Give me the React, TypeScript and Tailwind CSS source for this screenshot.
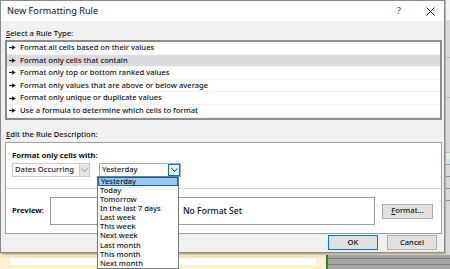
import React from "react";

const font = { fontFamily: '"Noto Sans", "Open Sans", sans-serif' };

const ruleTypes = [
  "Format all cells based on their values",
  "Format only cells that contain",
  "Format only top or bottom ranked values",
  "Format only values that are above or below average",
  "Format only unique or duplicate values",
  "Use a formula to determine which cells to format",
];

const dateOptions = [
  "Yesterday",
  "Today",
  "Tomorrow",
  "In the last 7 days",
  "Last week",
  "This week",
  "Next week",
  "Last month",
  "This month",
  "Next month",
];

function Arrow() {
  return (
    <svg width="7" height="5" viewBox="0 0 7 5" className="shrink-0">
      <path d="M0 2.5h3" stroke="#222" strokeWidth="1.2" />
      <path d="M3 0.3L6.8 2.5L3 4.7Z" fill="#222" />
    </svg>
  );
}

function Chevron({ color }: { color: string }) {
  return (
    <svg width="7" height="4" viewBox="0 0 7 4">
      <path d="M0.5 0.5L3.5 3.3L6.5 0.5" fill="none" stroke={color} strokeWidth="1" />
    </svg>
  );
}

export default function App() {
  return (
    <div className="relative w-[450px] h-[269px] overflow-hidden bg-[#fbf0d2] text-[#111] font-medium" style={font}>
      <div className="flex h-[255px]">
        {/* dialog */}
        <div className="w-[445px] h-[253px] flex flex-col bg-[#f0f0f0] border border-[#8a8a8a] shadow-[1px_1px_3px_rgba(0,0,0,0.45)]">
          {/* title bar */}
          <div className="h-[20px] shrink-0 bg-white flex items-center pl-[6px] pr-[9px] text-[9.2px] font-normal">
            <span className="flex-1">New Formatting Rule</span>
            <span className="text-[9px] text-[#444] mr-[25px]">?</span>
            <svg width="9" height="9" viewBox="0 0 9 9">
              <path d="M0.5 0.5L8.5 8.5M8.5 0.5L0.5 8.5" stroke="#222" strokeWidth="1" />
            </svg>
          </div>

          <div className="flex flex-col px-[4px] text-[7.6px]">
            <div className="h-[19px] flex items-end pb-[1px] pl-[1px]">
              <span>
                <span className="underline">S</span>elect a Rule Type:
              </span>
            </div>
            {/* rule type list */}
            <div className="w-[437px] h-[80px] bg-white border-2 border-[#8c8c8c]">
              {ruleTypes.map((r, i) => (
                <div
                  key={r}
                  className={`h-[12.6px] flex items-center gap-[4px] pl-[2px] border-b border-[#f3f3f3] ${
                    i === 1 ? "bg-[#dcdce0]" : ""
                  }`}
                >
                  <Arrow />
                  <span className="leading-none whitespace-nowrap">{r}</span>
                </div>
              ))}
            </div>
            <div className="h-[21px] flex items-end pb-[1px] pl-[1px]">
              <span>
                <span className="underline">E</span>dit the Rule Description:
              </span>
            </div>

            {/* description group */}
            <div className="w-[437px] h-[92px] mt-[1px] bg-white border border-[#a0a0a0] flex flex-col">
              <div className="h-[46px] flex flex-col px-[6px] border-b border-[#d8d8d8]">
                <div className="h-[19px] flex items-end pb-[1px] font-bold">Format only cells with:</div>
                <div className="flex gap-[9px] mt-[1px]">
                  <div className="w-[78px] h-[14px] border border-[#c8c8c8] flex items-center pl-[2px] text-[#222]">
                    <span className="flex-1 leading-none whitespace-nowrap">Dates Occurring</span>
                    <div className="w-[10px] h-[12px] bg-[#e5e5e5] border-l border-[#cfcfcf] flex items-center justify-center">
                      <Chevron color="#888" />
                    </div>
                  </div>
                  <div className="w-[82px] h-[14px] border border-[#a8a8a8] flex items-center pl-[2px]">
                    <span className="flex-1 leading-none whitespace-nowrap">Yesterday</span>
                    <div className="w-[12px] h-[12px] bg-[#e5f1fb] border border-[#0078d7] flex items-center justify-center">
                      <Chevron color="#222" />
                    </div>
                  </div>
                </div>
              </div>
              <div className="flex-1 flex items-center pl-[6px] pr-[7px]">
                <span className="font-bold w-[38px]">Preview:</span>
                <div className="w-[325px] h-[28px] border border-[#9a9a9a] flex items-center justify-center text-[8.6px]">
                  No Format Set
                </div>
                <div className="ml-[7px] w-[51px] h-[15px] bg-[#e1e1e1] border border-[#adadad] flex items-center justify-center">
                  <span>
                    <span className="underline">F</span>ormat...
                  </span>
                </div>
              </div>
            </div>

            {/* buttons */}
            <div className="flex justify-end gap-[9px] pr-[3px] mt-[1px]">
              <div className="w-[50px] h-[15px] bg-[#e1e1e1] border border-[#0078d7] flex items-center justify-center">
                OK
              </div>
              <div className="w-[50px] h-[15px] bg-[#e1e1e1] border border-[#adadad] flex items-center justify-center">
                Cancel
              </div>
            </div>
            <div className="flex justify-end mt-[1px]">
              <svg width="5" height="5" viewBox="0 0 5 5">
                <rect x="3.5" y="0" width="1" height="1" fill="#b0b0b0" />
                <rect x="1.75" y="1.75" width="1" height="1" fill="#b0b0b0" />
                <rect x="3.5" y="1.75" width="1" height="1" fill="#b0b0b0" />
                <rect x="0" y="3.5" width="1" height="1" fill="#b0b0b0" />
                <rect x="1.75" y="3.5" width="1" height="1" fill="#b0b0b0" />
                <rect x="3.5" y="3.5" width="1" height="1" fill="#b0b0b0" />
              </svg>
            </div>
          </div>
        </div>

        {/* excel behind, right edge */}
        <div className="flex-1 flex flex-col bg-[#d9d9d9] border-l border-[#b0b0b0]">
          <div className="h-[20px] bg-[#f3f3f3]" />
          <div className="h-[38px] border-b border-[#bcbcbc]" />
          <div className="h-[40px] border-b border-[#bcbcbc]" />
          <div className="h-[55px] border-b border-[#bcbcbc]" />
          <div className="h-[6px] bg-[#e2efda]" />
          <div className="h-[6px] bg-[#cfe0f1] border-b border-[#9a9a9a]" />
          <div className="h-[12px] border-b border-[#8a8a8a]" />
          <div className="h-[12px] border-b border-[#8a8a8a]" />
          <div className="h-[12px] border-b border-[#8a8a8a]" />
        </div>
      </div>

      {/* excel behind, bottom */}
      <div className="flex h-[14px]">
        <div className="w-[326px] flex flex-col">
          <div className="h-[3px] bg-[#f2e6c2]" />
          <div className="h-[7px] mx-[10px] bg-white" />
          <div className="flex-1 bg-[#fbf0d2]" />
        </div>
        <div className="w-[2px] bg-[#2e7d32]" />
        <div className="flex-1 bg-[#a6a6a6] flex flex-col">
          <div className="h-[4px] border-b border-[#7a7a7a]" />
          <div className="h-[6px] border-b border-[#7a7a7a]" />
        </div>
      </div>

      {/* open dropdown list */}
      <div className="absolute left-[97px] top-[176px] w-[82px] h-[93px] bg-white border border-[#7a7a7a] text-[7.5px] flex flex-col">
        {dateOptions.map((d, i) => (
          <div
            key={d}
            className={`h-[9.2px] flex items-center pl-[2px] leading-none ${
              i === 0 ? "bg-[#99c9ef] border border-[#0063b1]" : ""
            }`}
          >
            {d}
          </div>
        ))}
      </div>
    </div>
  );
}
